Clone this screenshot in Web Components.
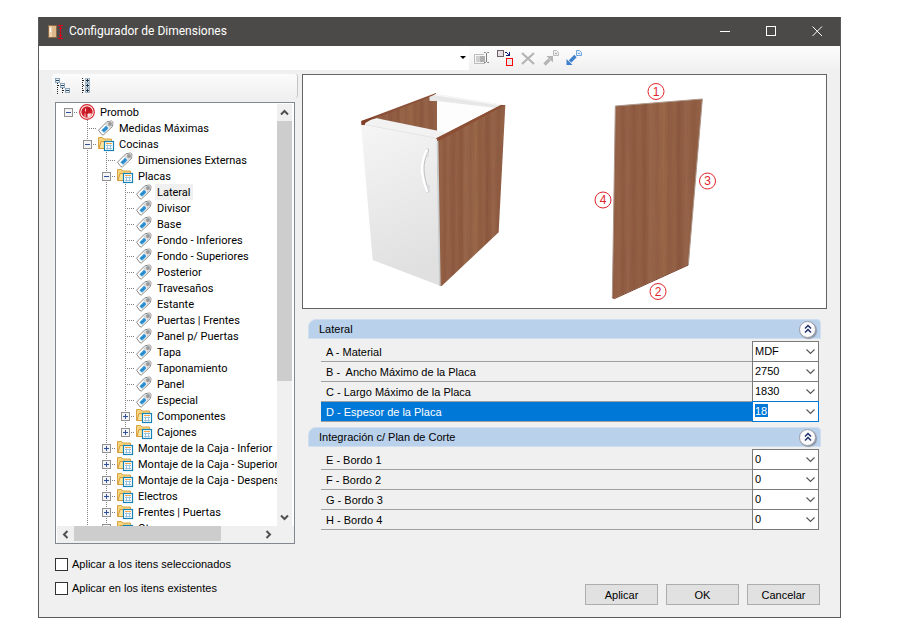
<!DOCTYPE html>
<html lang="es">
<head>
<meta charset="utf-8">
<meta name="viewport" content="width=device-width, initial-scale=1">
<title>Configurador de Dimensiones</title>
<style>
  html, body { height: 100%; margin: 0; }
  body {
    box-sizing: border-box;
    padding: 17px 79px 10px 38px;
    background: #fff;
    color: #000;
    font: 11px/16px "Liberation Sans", Arial, sans-serif;
  }
</style>
</head>
<body>
<config-dialog></config-dialog>

<script>
(() => {
  const define = (name, html, setup) => {
    const template = document.createElement('template');
    template.innerHTML = html;
    customElements.define(name, class extends HTMLElement {
      constructor() {
        super();
        this.attachShadow({ mode: 'open' }).append(template.content.cloneNode(true));
      }

      connectedCallback() {
        if (setup) setup(this, this.shadowRoot);
      }
    });
  };

  const ICONS = {
    app: `<svg width="18" height="16" viewBox="0 0 18 16" shape-rendering="crispEdges">
      <rect x="1.500" y="1.500" width="8" height="12" fill="#dcb88a" stroke="#8b6a45"/>
      <rect x="2" y="2" width="3" height="11" fill="#ecd2ae"/><rect x="3" y="4" width="1" height="4" fill="#fff"/>
      <g fill="#e2001a"><rect x="11" y="1" width="5" height="1"/><rect x="11" y="14" width="5" height="1"/>
      <rect x="13" y="2" width="1" height="12"/><rect x="12" y="4" width="3" height="1"/><rect x="12" y="11" width="3" height="1"/></g></svg>`,
    promob: `<svg width="18" height="16" viewBox="0 0 18 16">
      <circle cx="9" cy="8" r="7.300" fill="#fff" stroke="#d3242b" stroke-width="1.200"/>
      <circle cx="9" cy="8" r="5.700" fill="#d01c28"/>
      <path d="M9.500 9.500h4.500a5.700 5.700 0 0 1-4.500 4z" fill="#fbe3e4"/>
      <path d="M7.500 4.500v3M7 9.500v3.500" stroke="#f6c3c6" stroke-width="1"/>
      <path d="M9.500 4.500h2v2h-2M9.500 7.500v2" stroke="#a8121d" fill="none"/></svg>`,
    tag: `<svg width="18" height="16" viewBox="0 0 18 16">
      <path d="M1.500 10.200L9.800 1.800l4.700-.8 1.500 1.200-.5 4.300L6.500 14.800H5z" fill="#fff" stroke="#8c8c8c"/>
      <path d="M10.200 2.300l4.100-.7 1.100 1-.4 3.700-2.200 2.200-4.700-4z" fill="#d8d8d8"/>
      <path d="M4.500 10.300l4.500-4.500 2.500 2.500-4.500 4.500z" fill="#1f84ca"/>
      <path d="M5 10.500L9.500 6M6.500 12L11 7.500" stroke="#79c3ee" stroke-dasharray="1 1" fill="none"/>
      <rect x="12" y="3" width="2" height="2" fill="#fff" stroke="#6e6e6e" stroke-width=".9"/></svg>`,
    folder: `<svg width="18" height="16" viewBox="0 0 18 16">
      <path d="M1.500 12.500V1.500h4l1.500 1.500h7.500v9.500z" fill="#f5d47c" stroke="#d9a244"/>
      <path d="M2 12.500l2-7h11l-1 7z" fill="#fce59a" stroke="#d79a3b"/>
      <rect x="7.500" y="5.500" width="9" height="9" fill="#fff" stroke="#1583b8" stroke-width="1.200"/>
      <path d="M9 7.500h6" stroke="#f4a742"/><path d="M9 9.500h6M9 12.500h6M10.500 8.500v5M13.500 8.500v5" stroke="#9ac2dc"/></svg>`,
    collapseAll: `<svg width="16" height="16" viewBox="0 0 16 16" shape-rendering="crispEdges">
      <path d="M2.500 5v11M7.500 10v6M3 7.500h2M8 12.500h2" stroke="#222" stroke-dasharray="1 1"/>
      <g fill="#eaf1f7" stroke="#8ba3b6"><path d="M.5.500h4v4h-4zM5.500 5.500h4v4h-4zM10.500 10.500h4v4h-4z"/></g>
      <path d="M1 2.500h3M6 7.500h3M11 12.500h3" stroke="#24425c"/></svg>`,
    expandAll: `<svg width="16" height="16" viewBox="0 0 16 16" shape-rendering="crispEdges">
      <path d="M1.500 0v15M2 2.500h2M2 7.500h2M2 12.500h2" stroke="#222" stroke-dasharray="1 1"/>
      <g fill="#dce7ef" stroke="#a3b6c5"><path d="M4.500.500h4v4h-4zM4.500 5.500h4v4h-4zM4.500 10.500h4v4h-4z"/></g>
      <path d="M5 2.500h3M5 7.500h3M5 12.500h3M6.500 1v3M6.500 6v3M6.500 11v3" stroke="#1d3548"/></svg>`,
    rename: `<svg width="16" height="16" viewBox="0 0 16 16">
      <path d="M10 4.500H.5v9h10.500" fill="none" stroke="#bbb"/><path d="M2 6h5v6H2z" fill="#cfcfcf"/><path d="M6 6h5v6H6z" fill="#b0b0b0"/>
      <path d="M10 2.500h1.500l1 1 1-1H15M12.500 3v9M10 12.500h1.500l1-1 1 1H15" fill="none" stroke="#808080"/></svg>`,
    swap: `<svg width="16" height="16" viewBox="0 0 16 16" shape-rendering="crispEdges">
      <rect x=".5" y=".5" width="6" height="6" fill="#e3dfe3" stroke="#706066"/>
      <rect x="9.500" y="8.500" width="6" height="7" fill="#e8e8e8" stroke="#f00"/>
      <path d="M8 2.500h2M10 3.500h1M11 4.500h1M9 5.500h4M12.500 2v4M11 4.500h2" stroke="#0c1c78"/></svg>`,
    remove: `<svg width="16" height="16" viewBox="0 0 16 16">
      <path d="M2 3l12 11M14 3L2 14" stroke="#b4b4b4" stroke-width="2.200"/></svg>`,
    exportDoc: `<svg width="16" height="16" viewBox="0 0 16 16">
      <path d="M1.500 14.500l5-5" stroke="#b4b4b4" stroke-width="3.200"/><path d="M3.500 6H10v6.500z" fill="#b4b4b4"/>
      <path d="M10.500.5h3l2 2v3h-5z" fill="#eee" stroke="#bbb"/><path d="M12 3.500h2" stroke="#aaa"/></svg>`,
    importDoc: `<svg width="16" height="16" viewBox="0 0 16 16">
      <path d="M9.500 6l-5.500 5.500" stroke="#3f80cc" stroke-width="3.400"/><path d="M.5 9v6h6z" fill="#3f80cc"/>
      <path d="M10.500.5h3l2 2v3h-5z" fill="#e3eefa" stroke="#6ea5dd"/><path d="M12 3.500h2" stroke="#6ea5dd"/></svg>`
  };

  /* Paints one of the ICONS entries, chosen by the name attribute. */
  define('ui-icon', `
    <style>
      :host { display: inline-flex; flex: none; }
      svg { display: block; }
    </style>
  `, (host, root) => {
    if (!root.querySelector('svg')) {
      root.append(document.createRange().createContextualFragment(ICONS[host.getAttribute('name')]));
    }
  });

  /* Borderless button for toolbars and the caption bar. */
  define('tool-button', `
    <style>
      :host { display: inline-flex; }
      button { display: flex; align-items: center; justify-content: center; width: var(--button-width, 23px);
        padding: 0; border: 0; background: none; color: inherit; font: inherit; }
    </style>
    <button type="button"><slot></slot></button>
  `, (host, root) => root.querySelector('button').setAttribute('aria-label', host.getAttribute('label')));

  define('title-bar', `
    <style>
      :host { display: flex; align-items: stretch; height: 29px; padding-left: 8px; background: #4c4a48; color: #fff;
        font: 12px/28px Roboto, "Noto Sans", sans-serif; --button-width: 46px; }
      ui-icon { align-self: center; margin-right: 4px; }
      h1 { flex: 1; margin: 0; font: inherit; white-space: nowrap; }
      path, rect { fill: none; stroke: #fff; }
    </style>
    <ui-icon name="app"></ui-icon>
    <h1><slot></slot></h1>
    <tool-button label="Minimizar"><svg width="11" height="11"><path d="M0 5.500h10"/></svg></tool-button>
    <tool-button label="Maximizar"><svg width="11" height="11"><rect x=".5" y=".5" width="9" height="9"/></svg></tool-button>
    <tool-button label="Cerrar"><svg width="11" height="11"><path d="M.5.500l9.500 9.500M10 .500L.5 10"/></svg></tool-button>
  `);

  define('tool-bar', `
    <style>
      :host { display: flex; align-items: stretch; height: 24px; background: linear-gradient(#fdfdfd, #f0f0f0); }
      .preset { display: grid; flex: 0 1 430px; }
      .preset > * { grid-area: 1 / 1; }
      select { appearance: none; width: 100%; border: 0; border-radius: 0; background: #fff; font: inherit; }
      svg { place-self: center end; margin-right: 2px; pointer-events: none; }
      nav { display: flex; padding-left: 1px; }
    </style>
    <div class="preset">
      <select aria-label="Configuración"><option></option></select>
      <svg width="7" height="4"><path d="M0 0h6l-3 3z"/></svg>
    </div>
    <nav>
      <tool-button label="Renombrar"><ui-icon name="rename"></ui-icon></tool-button>
      <tool-button label="Reemplazar"><ui-icon name="swap"></ui-icon></tool-button>
      <tool-button label="Eliminar"><ui-icon name="remove"></ui-icon></tool-button>
      <tool-button label="Exportar"><ui-icon name="exportDoc"></ui-icon></tool-button>
      <tool-button label="Importar"><ui-icon name="importDoc"></ui-icon></tool-button>
    </nav>
  `);

  /*
   * Tree node. Attributes: label, icon, state ("open" | "closed"), selected,
   * continues (more siblings are to follow, so the guide runs on).
   * Each node draws its own stretch of the dotted guide next to its siblings.
   */
  define('tree-node', `
    <style>
      :host { display: block; white-space: nowrap;
        background: repeating-linear-gradient(#808080 0 1px, transparent 1px 2px) 9px 0 / 1px 100% no-repeat; }
      :host(:last-of-type:not([continues])) { background-size: 1px 8px; }
      :host([root]) { background: none; }
      .row { display: flex; align-items: center; height: 16px; }
      .cell { display: flex; justify-content: center; align-items: center; flex: none; width: 19px; height: 16px;
        background: repeating-linear-gradient(90deg, #808080 0 1px, transparent 1px 2px) 9px 8px / 10px 1px no-repeat; }
      .cell svg { display: none; }
      :host([state]) .cell svg { display: block; }
      :host([state="open"]) .plus { display: none; }
      .label { height: 16px; margin-left: 2px; padding: 0 2px; line-height: 18px; }
      :host([selected]) .label { background: #f0f0f0; }
      .children { margin-left: 19px; }
      :host([state="closed"]) .children { display: none; }
    </style>
    <div class="row">
      <span class="cell"><svg width="9" height="9" viewBox="0 0 9 9" shape-rendering="crispEdges">
        <rect x=".5" y=".5" width="8" height="8" fill="#f4f4f4" stroke="#919191"/>
        <path d="M2 4.500h5" stroke="#2f4f9f"/><path class="plus" d="M4.500 2v5" stroke="#2f4f9f"/>
      </svg></span>
      <ui-icon></ui-icon><span class="label"></span>
    </div>
    <div class="children"><slot></slot></div>
  `, (host, root) => {
    root.querySelector('.label').textContent = host.getAttribute('label');
    const icon = document.createElement('ui-icon');
    icon.setAttribute('name', host.getAttribute('icon') || (host.hasAttribute('state') ? 'folder' : 'tag'));
    root.querySelector('ui-icon').replaceWith(icon);
  });

  define('scroll-bar', `
    <style>
      :host { display: flex; flex-direction: column; width: 15px; background: #f0f0f0; --thumb: 67%; }
      :host([horizontal]) { flex-direction: row; width: auto; height: 17px; --thumb: 79%; }
      button { flex: none; display: flex; align-items: center; justify-content: center; width: 100%; height: 17px;
        padding: 0; border: 0; background: none; }
      .track { flex: 1; min-height: 0; }
      .thumb { width: 100%; height: var(--thumb); background: #cdcdcd; }
      path { fill: none; stroke: #505050; stroke-width: 2; }
      :host([horizontal]) button { width: 17px; height: 100%; }
      :host([horizontal]) .thumb { width: var(--thumb); height: 15px; }
      :host([horizontal]) svg { transform: rotate(-90deg); }
    </style>
    <button type="button" aria-label="Atrás"><svg width="9" height="7"><path d="M1 5.500l3.500-3.500L8 5.500"/></svg></button>
    <div class="track"><div class="thumb"></div></div>
    <button type="button" aria-label="Adelante"><svg width="9" height="7"><path d="M1 1.500L4.500 5 8 1.500"/></svg></button>
  `);

  define('tree-view', `
    <style>
      :host { display: grid; grid-template: minmax(0, 1fr) 17px / minmax(0, 1fr) 17px; border: 1px solid #828790;
        padding: 1px 0 0 1px; background: #fff; overflow: hidden; font-family: Roboto, Arial, sans-serif; }
      .nodes { overflow: hidden; padding-left: 2px; }
      scroll-bar { margin-right: 2px; }
      scroll-bar[horizontal] { margin: 0; }
      .corner { background: #f0f0f0; }
    </style>
    <div class="nodes"><slot></slot></div>
    <scroll-bar></scroll-bar>
    <scroll-bar horizontal></scroll-bar>
    <div class="corner"></div>
  `);

  define('check-option', `
    <style>
      :host { display: block; }
      label { display: flex; align-items: center; gap: 4px; }
      input { appearance: none; width: 13px; height: 13px; margin: 0; border: 1px solid #333; background: #fff; }
      input:checked { box-shadow: inset 0 0 0 2px #fff; background: #333; }
    </style>
    <label><input type="checkbox"><slot></slot></label>
  `);

  define('push-button', `
    <style>
      :host { display: block; }
      button { width: 73px; height: 21px; padding: 0; border: 1px solid #adadad; background: #e1e1e1; color: inherit; font: inherit; }
    </style>
    <button type="button"><slot></slot></button>
  `);

  define('property-group', `
    <style>
      :host { display: block; }
      header { display: flex; align-items: center; justify-content: space-between; box-sizing: border-box; height: 20px;
        padding: 0 4px 0 10px; border: 1px solid #cfdff0; border-radius: 8px 4px 0 0; background: #b9d1ea; }
      h2 { margin: 0; font: inherit; }
      button { width: 17px; height: 17px; padding: 0; border: 1px solid #9c9ca6; border-radius: 50%;
        background: #fafafc; box-shadow: 1px 1px 1px #8a94a6; }
      svg { display: block; margin: auto; }
      path { fill: none; stroke: #203068; stroke-width: 1.500; }
      .rows { padding: 2px 2px 0 13px; }
    </style>
    <header>
      <h2></h2>
      <button type="button" aria-label="Contraer"><svg width="10" height="10"><path d="M2 4.500l3-3 3 3M2 8.500l3-3 3 3"/></svg></button>
    </header>
    <div class="rows"><slot></slot></div>
  `, (host, root) => { root.querySelector('h2').textContent = host.getAttribute('label'); });

  /* Label and drop-down of one parameter. Attributes: label, value, current. */
  define('property-row', `
    <style>
      :host { display: block; margin-bottom: -1px; }
      .row { display: grid; grid-template-columns: minmax(0, 1fr) 67px; height: 21px; }
      label { height: 19px; margin-top: 1px; padding-left: 5px; border-bottom: 1px solid #a0a0a0; line-height: 20px; white-space: pre; }
      .field { display: grid; }
      .field > * { grid-area: 1 / 1; }
      select { appearance: none; box-sizing: border-box; width: 100%; height: 21px; padding: 0 0 1px 2px;
        border: 1px solid #7a7a7a; border-radius: 0; background: #fff; color: inherit; font: 11px "Liberation Sans", sans-serif; }
      svg { place-self: center end; margin-right: 4px; pointer-events: none; }
      path { fill: none; stroke: #555; stroke-width: 1.100; }
      :host([current]) { position: relative; }
      :host([current]) label { background: #0078d7; color: #fff; }
      :host([current]) select { border-color: #0078d7; color: #fff;
        background: linear-gradient(#0078d7, #0078d7) 2px 2px / 13px 13px no-repeat #fff; }
      :host([current]) option { color: #000; }
    </style>
    <div class="row">
      <label for="value"></label>
      <div class="field">
        <select id="value"></select>
        <svg width="9" height="6"><path d="M.5.500l4 4 4-4"/></svg>
      </div>
    </div>
  `, (host, root) => {
    root.querySelector('label').textContent = host.getAttribute('label');
    root.querySelector('select').replaceChildren(new Option(host.getAttribute('value')));
  });

  /* Module drawing with its highlighted board and the numbered edges. */
  define('module-preview', `
    <style>
      :host { display: block; border: 1px solid #646464; background: #fff; }
      svg { display: block; width: 100%; height: 233px; }
      circle { fill: #fff; stroke: #e0262c; stroke-width: 1; }
      text { fill: #e0262c; font: 12px "Liberation Sans", Arial, sans-serif; text-anchor: middle; }
    </style>
    <svg viewBox="303 75 523 233" role="img" aria-label="Lateral">
      <defs>
        <linearGradient id="wood">
          <stop stop-color="#915d43"/><stop offset=".07" stop-color="#976448"/><stop offset=".12" stop-color="#8f5a40"/>
          <stop offset=".17" stop-color="#97654b"/><stop offset=".24" stop-color="#8e5940"/><stop offset=".3" stop-color="#956246"/>
          <stop offset=".36" stop-color="#8c573f"/><stop offset=".42" stop-color="#9a684a"/><stop offset=".5" stop-color="#936045"/>
          <stop offset=".57" stop-color="#9c6a4a"/><stop offset=".63" stop-color="#905d42"/><stop offset=".69" stop-color="#956346"/>
          <stop offset=".74" stop-color="#8b573f"/><stop offset=".82" stop-color="#98664b"/><stop offset=".9" stop-color="#8f5c42"/>
          <stop offset="1" stop-color="#96654a"/>
        </linearGradient>
        <linearGradient id="door" x2=".2" y2="1"><stop stop-color="#f5f5f5"/><stop offset="1" stop-color="#e0e0e1"/></linearGradient>
        <filter id="grain" x="0" y="0" width="1" height="1" color-interpolation-filters="sRGB">
          <feTurbulence type="fractalNoise" baseFrequency=".2 .008" numOctaves="2" seed="4"/>
          <feColorMatrix values="0 0 0 0 .45  0 0 0 0 .27  0 0 0 0 .18  .3 0 0 0 -.09"/>
          <feComposite in2="SourceGraphic" operator="in"/>
          <feBlend in2="SourceGraphic"/>
        </filter>
      </defs>
      <g transform="translate(340 75) scale(.33333)">
        <path d="M64 138L288 54v14L110 130 66 150z" fill="#8a5038"/>
        <path d="M108 130L268 66l23 12v94l-15 8z" fill="url(#wood)" filter="url(#grain)"/>
        <path d="M291 78l178 21-178 77z" fill="#fdfdfe"/>
        <path d="M268 66l20-9 206 33-24 9-179-21h-22z" fill="#e7e7e8"/>
        <path d="M288 57l206 33-8 3-204-32z" fill="#f7f7f7"/>
        <path d="M64 148l12-10 34-8 205 42-23 26z" fill="#f2f2f3"/>
        <path d="M78 150L292 190" stroke="#e4e4e5" stroke-width="3"/>
        <path d="M64 138l46-14-34 20-2 7-10-1z" fill="#803f28"/>
        <path d="M289 190L483 90l13 0-20 382-171 161-7-1z" fill="url(#wood)" filter="url(#grain)"/>
        <path d="M289 190L483 90h12L297 198z" fill="#8c4f35"/>
        <path d="M63 149l228 44 9 439-202-77z" fill="url(#door)"/>
        <path d="M290 198l5-1 7 435-5-2z" fill="#c9ccce"/>
        <path d="M262 226q-28 53 1 121" fill="none" stroke="#c3c4c7" stroke-width="11" stroke-linecap="round"/>
        <path d="M260 226q-28 53 1 121" fill="none" stroke="#fff" stroke-width="8" stroke-linecap="round"/>
        <path d="M260 232l6-1v14l-7 2zM261 330l8-1v18l-5 3z" fill="#dadadd"/>
      </g>
      <g transform="translate(580 75) scale(.33333)">
        <path d="M106 93L367 72 325 569 103 670 97 668z" fill="url(#wood)" filter="url(#grain)"/>
        <path d="M106 93L97 668M367 72l-42 497M106 93L367 72" stroke="#ad998c" stroke-width="3" fill="none"/>
        <path d="M97 668l6 3 222-101" stroke="#76412c" stroke-width="3" fill="none"/>
      </g>
      <circle cx="656" cy="91.500" r="8"/><text x="656" y="96">1</text>
      <circle cx="658" cy="291.500" r="8"/><text x="658" y="296">2</text>
      <circle cx="707.500" cy="181" r="8"/><text x="707.500" y="185">3</text>
      <circle cx="603" cy="200" r="8"/><text x="603" y="204">4</text>
    </svg>
  `);

  define('config-dialog', `
    <style>
      :host { display: flex; flex-direction: column; box-sizing: border-box; height: 100%; min-height: 560px; min-width: 640px;
        border: 1px solid #5a5a5a; border-top: 0; background: #f0f0f0; }
      main { flex: 1; min-height: 0; display: grid; grid-template-columns: 246px minmax(0, 1fr); gap: 4px;
        padding: 4px 13px 12px; }
      .side, .detail { display: flex; flex-direction: column; min-height: 0; }
      .side { padding: 0 3px; }
      .strip { display: flex; align-items: center; gap: 10px; height: 24px; margin: 0 -3px; padding-left: 3px;
        border-right: 1px solid #c4c4c4; border-radius: 3px; background: linear-gradient(#fcfcfc, #f0f0f0); --button-width: 16px; }
      tree-view { flex: 1; min-height: 0; margin-top: 4px; }
      .options { display: flex; flex-direction: column; gap: 8px; padding: 12px 0 9px; }
      .groups { display: flex; flex-direction: column; gap: 6px; padding: 10px 6px 0; }
      footer { display: flex; justify-content: flex-end; gap: 8px; margin-top: auto; padding-right: 7px; }
    </style>
    <title-bar>Configurador de Dimensiones</title-bar>
    <tool-bar></tool-bar>
    <main>
      <section class="side">
        <div class="strip">
          <tool-button label="Contraer todo"><ui-icon name="collapseAll"></ui-icon></tool-button>
          <tool-button label="Expandir todo"><ui-icon name="expandAll"></ui-icon></tool-button>
        </div>
        <tree-view>
          <tree-node root label="Promob" icon="promob" state="open">
            <tree-node label="Medidas Máximas"></tree-node>
            <tree-node label="Cocinas" state="open" continues>
              <tree-node label="Dimensiones Externas"></tree-node>
              <tree-node label="Placas" state="open">
                <tree-node label="Lateral" selected></tree-node>
                <tree-node label="Divisor"></tree-node>
                <tree-node label="Base"></tree-node>
                <tree-node label="Fondo - Inferiores"></tree-node>
                <tree-node label="Fondo - Superiores"></tree-node>
                <tree-node label="Posterior"></tree-node>
                <tree-node label="Travesaños"></tree-node>
                <tree-node label="Estante"></tree-node>
                <tree-node label="Puertas | Frentes"></tree-node>
                <tree-node label="Panel p/ Puertas"></tree-node>
                <tree-node label="Tapa"></tree-node>
                <tree-node label="Taponamiento"></tree-node>
                <tree-node label="Panel"></tree-node>
                <tree-node label="Especial"></tree-node>
                <tree-node label="Componentes" state="closed"></tree-node>
                <tree-node label="Cajones" state="closed"></tree-node>
              </tree-node>
              <tree-node label="Montaje de la Caja - Inferior" state="closed"></tree-node>
              <tree-node label="Montaje de la Caja - Superior" state="closed"></tree-node>
              <tree-node label="Montaje de la Caja - Despens" state="closed"></tree-node>
              <tree-node label="Electros" state="closed"></tree-node>
              <tree-node label="Frentes | Puertas" state="closed"></tree-node>
              <tree-node label="Otros" state="closed" continues></tree-node>
            </tree-node>
          </tree-node>
        </tree-view>
        <div class="options">
          <check-option>Aplicar a los itens seleccionados</check-option>
          <check-option>Aplicar en los itens existentes</check-option>
        </div>
      </section>
      <section class="detail">
        <module-preview></module-preview>
        <div class="groups">
          <property-group label="Lateral">
            <property-row label="A - Material" value="MDF"></property-row>
            <property-row label="B -  Ancho Máximo de la Placa" value="2750"></property-row>
            <property-row label="C - Largo Máximo de la Placa" value="1830"></property-row>
            <property-row label="D - Espesor de la Placa" value="18" current></property-row>
          </property-group>
          <property-group label="Integración c/ Plan de Corte">
            <property-row label="E - Bordo 1" value="0"></property-row>
            <property-row label="F - Bordo 2" value="0"></property-row>
            <property-row label="G - Bordo 3" value="0"></property-row>
            <property-row label="H - Bordo 4" value="0"></property-row>
          </property-group>
        </div>
        <footer>
          <push-button>Aplicar</push-button>
          <push-button>OK</push-button>
          <push-button>Cancelar</push-button>
        </footer>
      </section>
    </main>
  `);
})();
</script>
</body>
</html>
